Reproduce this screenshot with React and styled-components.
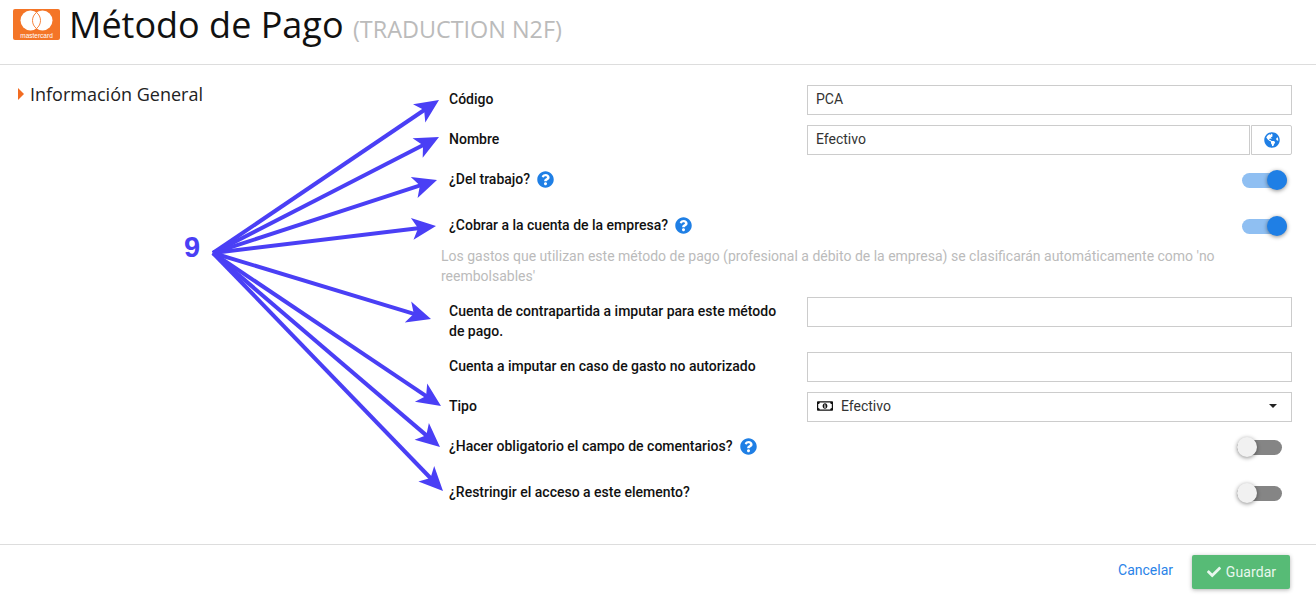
import React from 'react';
import styled, { createGlobalStyle } from 'styled-components';
import { FaGlobeAmericas, FaQuestionCircle, FaRegMoneyBillAlt, FaCheck } from 'react-icons/fa';

const Global = createGlobalStyle`
  html, body { margin: 0; padding: 0; background: #fff; overflow: hidden; }
  * { box-sizing: border-box; }
`;

const Page = styled.div`
  position: relative;
  width: 1316px;
  height: 595px;
  display: flex;
  flex-direction: column;
  font-family: Roboto, "Liberation Sans", sans-serif;
  font-size: 14px;
  color: #111;
`;

const Header = styled.header`
  height: 65px;
  flex: none;
  display: flex;
  align-items: flex-start;
  gap: 9px;
  padding: 9px 0 0 13px;
  border-bottom: 1px solid #ddd;
`;

const Title = styled.h1`
  margin: -8px 0 0;
  font-family: "Open Sans", sans-serif;
  font-weight: 400;
  font-size: 36px;
  line-height: 48px;
  color: #111;
`;

const Sub = styled.small`
  font-size: 23.4px;
  color: #bbb;
`;

const Main = styled.main`
  flex: 1;
  display: flex;
  padding-top: 20px;
`;

const Side = styled.aside`
  width: 449px;
  flex: none;
  padding-left: 18px;
`;

const SectionTitle = styled.h2`
  margin: -3px 0 0;
  display: flex;
  align-items: center;
  gap: 6px;
  font-family: "Open Sans", sans-serif;
  font-weight: 400;
  font-size: 18px;
  line-height: 24px;
  color: #222;
  &::before {
    content: "";
    border-left: 6px solid #f26c22;
    border-top: 6px solid transparent;
    border-bottom: 6px solid transparent;
  }
`;

const Form = styled.div`
  width: 843px;
  flex: none;
`;

const Row = styled.div`
  display: grid;
  grid-template-columns: 358px 485px;
  min-height: 30px;
  margin-bottom: 10px;
`;

const SwitchRow = styled.div`
  display: flex;
  justify-content: space-between;
  height: 36px;
  margin-bottom: 10px;
`;

const Label = styled.label`
  display: flex;
  align-items: flex-start;
  gap: 7px;
  padding: 4px 20px 1px 0;
  font-weight: 500;
  font-size: 14px;
  line-height: 20px;
  color: #111;
`;

const HelpIcon = styled(FaQuestionCircle)`
  width: 17px;
  height: 17px;
  margin-top: 2px;
  color: #1f7fe5;
`;

const Hint = styled.p`
  margin: -11px 0 11px -8px;
  font-size: 14px;
  line-height: 20px;
  color: #bbb;
`;

const Input = styled.input`
  width: 100%;
  height: 30px;
  min-width: 0;
  padding: 0 8px 2px;
  border: 1px solid #ccc;
  border-radius: 0;
  outline: none;
  font-family: inherit;
  font-size: 14px;
  color: #333;
`;

const Group = styled.div`
  display: flex;
`;

const Addon = styled.span`
  flex: none;
  width: 41px;
  height: 30px;
  margin-left: 1px;
  display: flex;
  align-items: center;
  justify-content: center;
  border: 1px solid #ccc;
  border-radius: 0 2px 2px 0;
  color: #1f7fe5;
  font-size: 16px;
`;

const Select = styled.div`
  height: 30px;
  display: flex;
  align-items: center;
  gap: 8px;
  padding: 0 14px 2px 9px;
  border: 1px solid #ccc;
  color: #333;
  svg { font-size: 16px; color: #111; }
  &::after {
    content: "";
    margin-left: auto;
    border-top: 4px solid #222;
    border-left: 4px solid transparent;
    border-right: 4px solid transparent;
  }
`;

const Toggle = styled.span`
  position: relative;
  flex: none;
  width: 50px;
  height: 36px;
  margin-right: 5px;
  &::before {
    content: "";
    position: absolute;
    top: 8px;
    left: ${p => (p.$on ? '5px' : '0')};
    width: 45px;
    height: 15px;
    border-radius: 8px;
    background: ${p => (p.$on ? '#8fbff2' : '#858585')};
  }
  &::after {
    content: "";
    position: absolute;
    top: 5px;
    left: ${p => (p.$on ? '30px' : '0')};
    width: 20px;
    height: 20px;
    border-radius: 50%;
    background: ${p => (p.$on ? '#1f7fe5' : '#f1f1f1')};
    box-shadow: 0 1px 4px rgba(0, 0, 0, 0.45);
  }
`;

const Footer = styled.footer`
  height: 51px;
  flex: none;
  display: flex;
  justify-content: flex-end;
  align-items: flex-start;
  gap: 19px;
  padding: 10px 26px 0 0;
  border-top: 1px solid #ddd;
`;

const CancelLink = styled.a`
  margin-top: 6px;
  line-height: 18px;
  color: #2a83e8;
  font-size: 14px;
`;

const SaveButton = styled.button`
  width: 98px;
  height: 34px;
  display: flex;
  align-items: center;
  justify-content: center;
  gap: 5px;
  padding: 0 0 0 1px;
  border: 0;
  border-radius: 2px;
  background: #57bb76;
  color: #e9f7ee;
  font-family: inherit;
  font-size: 14px;
  letter-spacing: 0.1px;
  box-shadow: 0 1px 4px rgba(0, 0, 0, 0.3);
`;

const Overlay = styled.svg`
  position: absolute;
  inset: 0;
  pointer-events: none;
`;

const Count = styled.span`
  position: absolute;
  left: 184px;
  top: 231px;
  font-family: "Liberation Sans", sans-serif;
  font-weight: 700;
  font-size: 29px;
  line-height: 32px;
  color: #4a3ff5;
`;

const origin = [213, 253];
const tips = [[439, 100], [439, 137], [437, 180], [436, 226], [431, 319], [441, 406], [440, 447], [443, 491]];

function arrowHead([x, y]) {
  const a = Math.atan2(y - origin[1], x - origin[0]);
  const pt = (along, across) => {
    const px = x - along * Math.cos(a) - across * Math.sin(a);
    const py = y - along * Math.sin(a) + across * Math.cos(a);
    return `${px.toFixed(1)},${py.toFixed(1)}`;
  };
  return [pt(0, 0), pt(24, 11), pt(18, 0), pt(24, -11)].join(' ');
}

function Arrows() {
  return (
    <Overlay width="1316" height="595" viewBox="0 0 1316 595">
      {tips.map((t, i) => {
        const a = Math.atan2(t[1] - origin[1], t[0] - origin[0]);
        return (
          <g key={i} fill="#4a3ff5" stroke="#4a3ff5">
            <line x1={origin[0]} y1={origin[1]} x2={t[0] - 16 * Math.cos(a)} y2={t[1] - 16 * Math.sin(a)} strokeWidth="4" />
            <polygon points={arrowHead(t)} strokeWidth="0" />
          </g>
        );
      })}
    </Overlay>
  );
}

function MastercardLogo() {
  return (
    <svg width="47" height="31" viewBox="0 0 47 31" style={{ flex: 'none' }}>
      <rect width="47" height="31" rx="2" fill="#f47527" />
      <circle cx="17.5" cy="11.5" r="10" fill="#fff" />
      <circle cx="29.5" cy="11.5" r="10" fill="#fff" />
      <path d="M23.5 3.5A10 10 0 0 1 23.5 19.5A10 10 0 0 1 23.5 3.5z" fill="#fff" stroke="#f47527" strokeWidth="0.9" />
      <text x="23.5" y="28.5" textAnchor="middle" fontFamily="Liberation Sans, sans-serif" fontSize="6.5" fill="#fff">mastercard</text>
    </svg>
  );
}

export default function App() {
  return (
    <Page>
      <Global />
      <Header>
        <MastercardLogo />
        <Title>Método de Pago <Sub>(TRADUCTION N2F)</Sub></Title>
      </Header>
      <Main>
        <Side>
          <SectionTitle>Información General</SectionTitle>
        </Side>
        <Form>
          <Row>
            <Label>Código</Label>
            <Input readOnly defaultValue="PCA" />
          </Row>
          <Row>
            <Label>Nombre</Label>
            <Group>
              <Input readOnly defaultValue="Efectivo" />
              <Addon><FaGlobeAmericas /></Addon>
            </Group>
          </Row>
          <SwitchRow>
            <Label>¿Del trabajo? <HelpIcon /></Label>
            <Toggle $on />
          </SwitchRow>
          <SwitchRow>
            <Label>¿Cobrar a la cuenta de la empresa? <HelpIcon /></Label>
            <Toggle $on />
          </SwitchRow>
          <Hint>Los gastos que utilizan este método de pago (profesional a débito de la empresa) se clasificarán automáticamente como 'no reembolsables'</Hint>
          <Row>
            <Label>Cuenta de contrapartida a imputar para este método de pago.</Label>
            <Input readOnly />
          </Row>
          <Row>
            <Label>Cuenta a imputar en caso de gasto no autorizado</Label>
            <Input readOnly />
          </Row>
          <Row>
            <Label>Tipo</Label>
            <Select><FaRegMoneyBillAlt /> Efectivo</Select>
          </Row>
          <SwitchRow>
            <Label>¿Hacer obligatorio el campo de comentarios? <HelpIcon /></Label>
            <Toggle />
          </SwitchRow>
          <SwitchRow>
            <Label>¿Restringir el acceso a este elemento?</Label>
            <Toggle />
          </SwitchRow>
        </Form>
      </Main>
      <Footer>
        <CancelLink>Cancelar</CancelLink>
        <SaveButton><FaCheck /> Guardar</SaveButton>
      </Footer>
      <Arrows />
      <Count>9</Count>
    </Page>
  );
}
